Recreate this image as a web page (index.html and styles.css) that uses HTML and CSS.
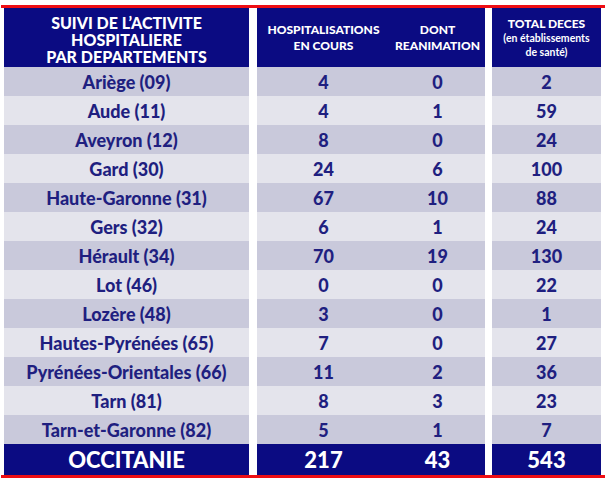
FILE: index.html
```html
<!DOCTYPE html>
<html lang="fr">
<head>
<meta charset="utf-8">
<title>Suivi de l'activité hospitalière - Occitanie</title>
<link rel="stylesheet" href="styles.css">
</head>
<body>
<div class="board">
  <div class="row head">
    <div class="cell c1 title"><div>SUIVI DE L’ACTIVITE<br>HOSPITALIERE<br>PAR DEPARTEMENTS</div></div>
    <div class="cell c2 sub"><div>HOSPITALISATIONS<br>EN COURS</div></div>
    <div class="cell c3 sub"><div>DONT<br>REANIMATION</div></div>
    <div class="cell c4 deaths"><div><span class="big">TOTAL DECES</span><br>(en établissements<br>de santé)</div></div>
  </div>
  <div class="row dark"><div class="cell c1">Ariège (09)</div><div class="cell c2">4</div><div class="cell c3">0</div><div class="cell c4">2</div></div>
  <div class="row light"><div class="cell c1">Aude (11)</div><div class="cell c2">4</div><div class="cell c3">1</div><div class="cell c4">59</div></div>
  <div class="row dark"><div class="cell c1">Aveyron (12)</div><div class="cell c2">8</div><div class="cell c3">0</div><div class="cell c4">24</div></div>
  <div class="row light"><div class="cell c1">Gard (30)</div><div class="cell c2">24</div><div class="cell c3">6</div><div class="cell c4">100</div></div>
  <div class="row dark"><div class="cell c1">Haute-Garonne (31)</div><div class="cell c2">67</div><div class="cell c3">10</div><div class="cell c4">88</div></div>
  <div class="row light"><div class="cell c1">Gers (32)</div><div class="cell c2">6</div><div class="cell c3">1</div><div class="cell c4">24</div></div>
  <div class="row dark"><div class="cell c1">Hérault (34)</div><div class="cell c2">70</div><div class="cell c3">19</div><div class="cell c4">130</div></div>
  <div class="row light"><div class="cell c1">Lot (46)</div><div class="cell c2">0</div><div class="cell c3">0</div><div class="cell c4">22</div></div>
  <div class="row dark"><div class="cell c1">Lozère (48)</div><div class="cell c2">3</div><div class="cell c3">0</div><div class="cell c4">1</div></div>
  <div class="row light"><div class="cell c1">Hautes-Pyrénées (65)</div><div class="cell c2">7</div><div class="cell c3">0</div><div class="cell c4">27</div></div>
  <div class="row dark"><div class="cell c1">Pyrénées-Orientales (66)</div><div class="cell c2">11</div><div class="cell c3">2</div><div class="cell c4">36</div></div>
  <div class="row light"><div class="cell c1">Tarn (81)</div><div class="cell c2">8</div><div class="cell c3">3</div><div class="cell c4">23</div></div>
  <div class="row dark"><div class="cell c1">Tarn-et-Garonne (82)</div><div class="cell c2">5</div><div class="cell c3">1</div><div class="cell c4">7</div></div>
  <div class="row total"><div class="cell c1">OCCITANIE</div><div class="cell c2">217</div><div class="cell c3">43</div><div class="cell c4">543</div></div>
</div>
</body>
</html>
```

FILE: styles.css
```css
html, body {
  margin: 0;
  padding: 0;
  background: #ffffff;
}

body {
  font-family: Lato, "Open Sans", "Liberation Sans", sans-serif;
  font-weight: 700;
}

.board {
  width: 601px;
  margin: 5px 0 0 1px;
  padding-left: 3px;
  border-top: 3px solid #ee0e14;
  border-bottom: 3px solid #ee0e14;
}

.row {
  display: flex;
  height: 29px;
}

.cell {
  display: flex;
  align-items: center;
  justify-content: center;
  text-align: center;
  color: #1f1f80;
  font-size: 18px;
  font-weight: 900;
}

.c1 { width: 245px; }
.c2 { width: 133px; margin-left: 8px; }
.c3 { width: 95px; }
.c4 { width: 109px; margin-left: 7px; }

.dark .cell { background: #c9c9db; }
.light .cell { background: #e4e4ec; }

.head { height: 59px; }
.head .cell {
  background: #0b0b82;
  color: #ffffff;
}

.title {
  font-size: 16px;
  line-height: 17px;
  padding-top: 4px;
  box-sizing: border-box;
}

.sub {
  font-size: 12px;
  line-height: 16px;
}

.deaths {
  font-size: 10.5px;
  line-height: 14px;
  font-weight: 700;
}

.deaths .big {
  font-size: 12px;
  font-weight: 900;
}

.total { height: 31px; }
.total .cell {
  background: #0b0b82;
  color: #ffffff;
  font-size: 22px;
}
```
